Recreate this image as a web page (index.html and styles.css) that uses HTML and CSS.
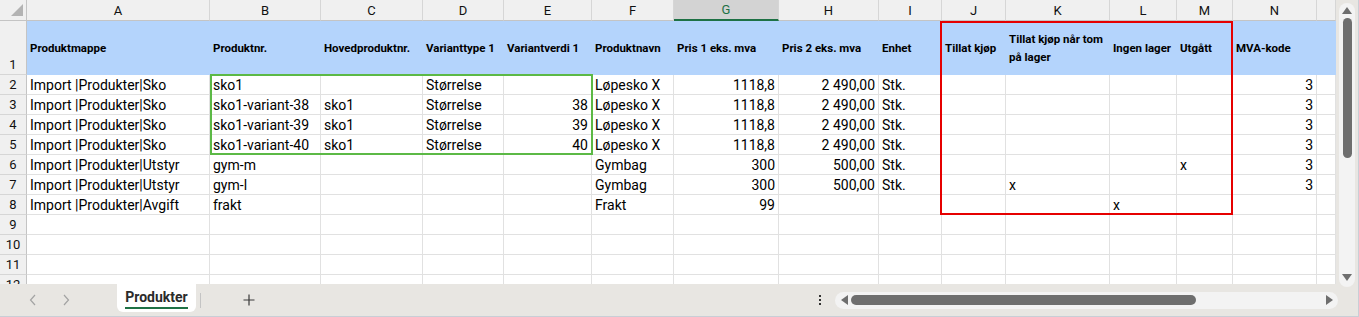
FILE: index.html
```html
<!DOCTYPE html>
<html lang="no">
<head>
<meta charset="utf-8">
<title>Produkter</title>
<link rel="stylesheet" href="styles.css">
</head>
<body>
<div class="app">
  <div class="main">
    <div class="sheet">
      <!-- column headers -->
      <div class="c corner"><svg class="tri" width="12" height="12" viewBox="0 0 12 12"><polygon points="12,0 12,12 0,12" fill="#b3b3b3"/></svg></div>
      <div class="c ch">A</div><div class="c ch">B</div><div class="c ch">C</div><div class="c ch">D</div><div class="c ch">E</div><div class="c ch">F</div><div class="c ch active">G</div><div class="c ch">H</div><div class="c ch">I</div><div class="c ch">J</div><div class="c ch">K</div><div class="c ch">L</div><div class="c ch">M</div><div class="c ch">N</div><div class="c ch"></div>

      <!-- row 1 -->
      <div class="c rh rh1">1</div>
      <div class="c hd">Produktmappe</div><div class="c hd">Produktnr.</div><div class="c hd">Hovedproduktnr.</div><div class="c hd">Varianttype 1</div><div class="c hd">Variantverdi 1</div><div class="c hd">Produktnavn</div><div class="c hd">Pris 1 eks. mva</div><div class="c hd">Pris 2 eks. mva</div><div class="c hd">Enhet</div><div class="c hd">Tillat kjøp</div><div class="c hd wrap">Tillat kjøp når tom på lager</div><div class="c hd">Ingen lager</div><div class="c hd">Utgått</div><div class="c hd">MVA-kode</div><div class="c hd"></div>

      <!-- row 2 -->
      <div class="c rh">2</div>
      <div class="c">Import |Produkter|Sko</div><div class="c">sko1</div><div class="c"></div><div class="c">Størrelse</div><div class="c n"></div><div class="c">Løpesko X</div><div class="c n">1118,8</div><div class="c n">2 490,00</div><div class="c">Stk.</div><div class="c"></div><div class="c"></div><div class="c"></div><div class="c"></div><div class="c n">3</div><div class="c"></div>

      <!-- row 3 -->
      <div class="c rh">3</div>
      <div class="c">Import |Produkter|Sko</div><div class="c">sko1-variant-38</div><div class="c">sko1</div><div class="c">Størrelse</div><div class="c n">38</div><div class="c">Løpesko X</div><div class="c n">1118,8</div><div class="c n">2 490,00</div><div class="c">Stk.</div><div class="c"></div><div class="c"></div><div class="c"></div><div class="c"></div><div class="c n">3</div><div class="c"></div>

      <!-- row 4 -->
      <div class="c rh">4</div>
      <div class="c">Import |Produkter|Sko</div><div class="c">sko1-variant-39</div><div class="c">sko1</div><div class="c">Størrelse</div><div class="c n">39</div><div class="c">Løpesko X</div><div class="c n">1118,8</div><div class="c n">2 490,00</div><div class="c">Stk.</div><div class="c"></div><div class="c"></div><div class="c"></div><div class="c"></div><div class="c n">3</div><div class="c"></div>

      <!-- row 5 -->
      <div class="c rh">5</div>
      <div class="c">Import |Produkter|Sko</div><div class="c">sko1-variant-40</div><div class="c">sko1</div><div class="c">Størrelse</div><div class="c n">40</div><div class="c">Løpesko X</div><div class="c n">1118,8</div><div class="c n">2 490,00</div><div class="c">Stk.</div><div class="c"></div><div class="c"></div><div class="c"></div><div class="c"></div><div class="c n">3</div><div class="c"></div>

      <!-- row 6 -->
      <div class="c rh">6</div>
      <div class="c">Import |Produkter|Utstyr</div><div class="c">gym-m</div><div class="c"></div><div class="c"></div><div class="c"></div><div class="c">Gymbag</div><div class="c n">300</div><div class="c n">500,00</div><div class="c">Stk.</div><div class="c"></div><div class="c"></div><div class="c"></div><div class="c">x</div><div class="c n">3</div><div class="c"></div>

      <!-- row 7 -->
      <div class="c rh">7</div>
      <div class="c">Import |Produkter|Utstyr</div><div class="c">gym-l</div><div class="c"></div><div class="c"></div><div class="c"></div><div class="c">Gymbag</div><div class="c n">300</div><div class="c n">500,00</div><div class="c">Stk.</div><div class="c"></div><div class="c">x</div><div class="c"></div><div class="c"></div><div class="c n">3</div><div class="c"></div>

      <!-- row 8 -->
      <div class="c rh">8</div>
      <div class="c">Import |Produkter|Avgift</div><div class="c">frakt</div><div class="c"></div><div class="c"></div><div class="c"></div><div class="c">Frakt</div><div class="c n">99</div><div class="c"></div><div class="c"></div><div class="c"></div><div class="c"></div><div class="c">x</div><div class="c"></div><div class="c"></div><div class="c"></div>

      <!-- rows 9-12 -->
      <div class="c rh">9</div><div class="c"></div><div class="c"></div><div class="c"></div><div class="c"></div><div class="c"></div><div class="c"></div><div class="c"></div><div class="c"></div><div class="c"></div><div class="c"></div><div class="c"></div><div class="c"></div><div class="c"></div><div class="c"></div><div class="c"></div>
      <div class="c rh">10</div><div class="c"></div><div class="c"></div><div class="c"></div><div class="c"></div><div class="c"></div><div class="c"></div><div class="c"></div><div class="c"></div><div class="c"></div><div class="c"></div><div class="c"></div><div class="c"></div><div class="c"></div><div class="c"></div><div class="c"></div>
      <div class="c rh">11</div><div class="c"></div><div class="c"></div><div class="c"></div><div class="c"></div><div class="c"></div><div class="c"></div><div class="c"></div><div class="c"></div><div class="c"></div><div class="c"></div><div class="c"></div><div class="c"></div><div class="c"></div><div class="c"></div><div class="c"></div>
      <div class="c rh">12</div><div class="c"></div><div class="c"></div><div class="c"></div><div class="c"></div><div class="c"></div><div class="c"></div><div class="c"></div><div class="c"></div><div class="c"></div><div class="c"></div><div class="c"></div><div class="c"></div><div class="c"></div><div class="c"></div><div class="c"></div>

      <div class="box-green"></div>
      <div class="box-red"></div>
    </div>

    <div class="vscroll">
      <div class="vtrack">
        <svg class="varrow up" width="10" height="7" viewBox="0 0 10 7"><polygon points="5,0 10,7 0,7" fill="#6e6e6e"/></svg>
        <div class="vthumb"></div>
        <svg class="varrow down" width="10" height="7" viewBox="0 0 10 7"><polygon points="0,0 10,0 5,7" fill="#6e6e6e"/></svg>
      </div>
    </div>
  </div>

  <div class="tabbar">
    <div class="nav">
      <svg class="chev" width="8" height="12" viewBox="0 0 8 12"><polyline points="6,1 1.5,6 6,11" fill="none" stroke="#a3a3a3" stroke-width="1.2"/></svg>
      <svg class="chev" width="8" height="12" viewBox="0 0 8 12"><polyline points="2,1 6.5,6 2,11" fill="none" stroke="#a3a3a3" stroke-width="1.2"/></svg>
    </div>
    <div class="tab"><span class="tab-label">Produkter</span></div>
    <div class="sep"></div>
    <svg class="plus" width="12" height="12" viewBox="0 0 12 12"><path d="M6 0.5V11.5M0.5 6H11.5" stroke="#3a3a3a" stroke-width="1.2" fill="none"/></svg>
    <div class="spacer"></div>
    <div class="dots"><i></i><i></i><i></i></div>
    <div class="htrack">
      <svg class="harrow" width="7" height="10" viewBox="0 0 7 10"><polygon points="0,5 7,0 7,10" fill="#6e6e6e"/></svg>
      <div class="hthumb"></div>
      <div class="hspace"></div>
      <svg class="harrow" width="7" height="10" viewBox="0 0 7 10"><polygon points="0,0 7,5 0,10" fill="#6e6e6e"/></svg>
    </div>
  </div>
</div>
</body>
</html>
```

FILE: styles.css
```css
* { box-sizing: border-box; }

html, body {
  margin: 0;
  padding: 0;
  background: #e8e6e2;
}

.app {
  width: 1359px;
  height: 317px;
  display: flex;
  flex-direction: column;
  background: #e8e6e2;
  border-right: 1px solid #c9ced6;
  overflow: hidden;
}

.main {
  display: flex;
  height: 284px;
  flex: none;
  position: relative;
  z-index: 1;
}

.sheet {
  position: relative;
  width: 1336px;
  height: 284px;
  overflow: hidden;
  background: #fff;
  display: grid;
  grid-template-columns: 27px 183px 111px 102px 81px 88px 82px 105px 100px 63px 64px 104px 67px 56px 84px 19px;
  grid-template-rows: 21px 54px repeat(11, 20px);
  font-family: Roboto, "Liberation Sans", sans-serif;
  font-size: 14px;
  color: #000;
}

.c {
  border-right: 1px solid #e1e1e1;
  border-bottom: 1px solid #e1e1e1;
  padding: 0 3px;
  white-space: nowrap;
  overflow: hidden;
  display: flex;
  align-items: center;
  min-width: 0;
}

.c.n {
  justify-content: flex-end;
  padding-right: 3px;
}

.ch {
  background: #f0f0f0;
  border-right-color: #d6d6d6;
  border-bottom-color: #c4c4c4;
  justify-content: center;
  font-size: 13px;
  color: #111;
  padding: 0;
}

.ch.active {
  background: #d3d3d3;
  color: #1e7145;
  border-bottom: 2px solid #1e7145;
}

.corner {
  background: #f0f0f0;
  border-right-color: #c4c4c4;
  border-bottom-color: #c4c4c4;
  position: relative;
  padding: 0;
}

.tri {
  position: absolute;
  right: 3px;
  bottom: 4px;
}

.rh {
  background: #f0f0f0;
  border-right-color: #c4c4c4;
  border-bottom-color: #d6d6d6;
  justify-content: center;
  font-size: 13px;
  padding: 0;
  color: #111;
}

.rh1 {
  align-items: flex-end;
  padding-bottom: 2px;
}

.hd {
  background: #b4d4fc;
  border-color: #b4d4fc;
  font-weight: 700;
  font-size: 11.5px;
  line-height: 18px;
  padding-left: 3px;
}

.hd.wrap {
  white-space: normal;
}

.box-green {
  position: absolute;
  left: 210px;
  top: 74px;
  width: 383px;
  height: 81px;
  border: 2px solid #5cb946;
  pointer-events: none;
}

.box-red {
  position: absolute;
  left: 940px;
  top: 21px;
  width: 293px;
  height: 194px;
  border: 2px solid #e60000;
  pointer-events: none;
}

/* vertical scrollbar */
.vscroll {
  width: 22px;
  height: 284px;
  background: #e8e6e2;
  padding: 3px 2px 0 3px;
}

.vtrack {
  width: 16px;
  height: 284px;
  border-radius: 8px;
  background: #f3f3f3;
  display: flex;
  flex-direction: column;
  align-items: center;
  padding-top: 4px;
}

.varrow { flex: none; }

.vthumb {
  width: 9px;
  height: 140px;
  margin-top: 4px;
  border-radius: 5px;
  background: #6e6e6e;
}

.varrow.down {
  margin-top: auto;
  margin-bottom: 6px;
}

/* tab bar */
.tabbar {
  height: 33px;
  flex: none;
  display: flex;
  align-items: center;
  border-bottom: 1px solid #c9ced6;
  font-family: Roboto, "Liberation Sans", sans-serif;
}

.nav {
  width: 117px;
  display: flex;
  align-items: center;
  padding-left: 29px;
  gap: 25px;
}

.tab {
  align-self: flex-start;
  width: 79px;
  height: 28px;
  background: #fff;
  border-radius: 0 0 6px 6px;
  display: flex;
  justify-content: center;
  align-items: flex-start;
  padding-top: 5px;
}

.tab-label {
  font-size: 14px;
  font-weight: 700;
  color: #2b2b2b;
  border-bottom: 2px solid #1e7145;
  padding-bottom: 2px;
  line-height: 16px;
}

.sep {
  width: 1px;
  height: 15px;
  background: #c4c4c4;
  margin-left: 4px;
}

.plus {
  margin-left: 42px;
}

.spacer { flex: 1; }

.dots {
  display: flex;
  flex-direction: column;
  gap: 2px;
  margin-right: 14px;
}

.dots i {
  display: block;
  width: 2px;
  height: 2px;
  background: #333;
}

.htrack {
  width: 503px;
  height: 17px;
  margin-right: 20px;
  border-radius: 9px;
  background: #f3f3f3;
  display: flex;
  align-items: center;
  padding: 0 5px 0 6px;
}

.hthumb {
  width: 345px;
  height: 10px;
  margin-left: 3px;
  border-radius: 5px;
  background: #6e6e6e;
}

.hspace { flex: 1; }
```
